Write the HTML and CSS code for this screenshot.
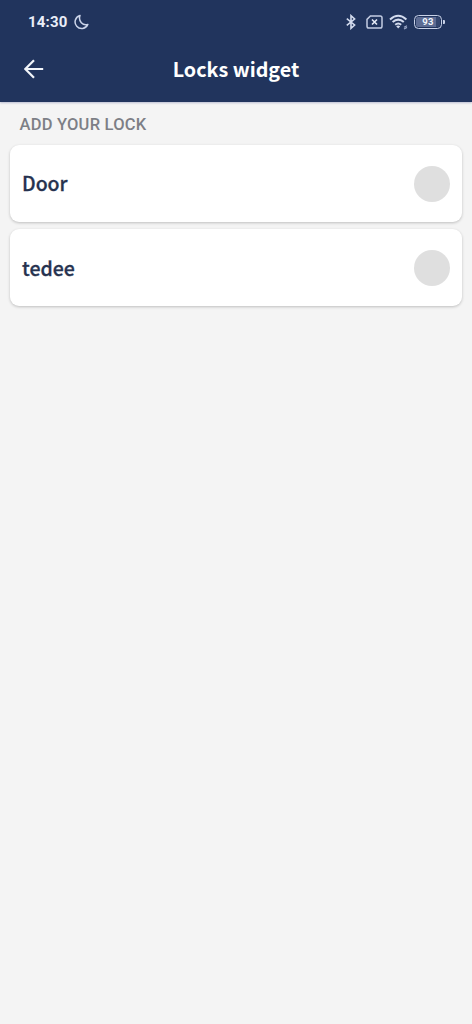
FILE: index.html
```html
<!DOCTYPE html>
<html lang="en">
<head>
<meta charset="utf-8">
<title>Locks widget</title>
<link rel="stylesheet" href="styles.css">
</head>
<body>
<header class="header">
  <div class="status">
    <div class="status-left">
      <span class="time">14:30</span>
      <svg class="moon" width="16" height="16" viewBox="0 0 16 16"><path d="M6 1.5A6.6 6.6 0 1 0 13.8 10.4C8.9 12 4 7.2 6 1.5Z"/></svg>
    </div>
    <div class="status-right">
      <svg class="bluetooth" width="12" height="16" viewBox="0 0 12 16"><path d="M1.8 4.6 9.6 11 6 14.3V1.7L9.6 5 1.8 11.4"/></svg>
      <svg class="sim" width="17" height="14" viewBox="0 0 17 14"><path d="M4.4 1H14.2Q16 1 16 2.8V11.2Q16 13 14.2 13H2.8Q1 13 1 11.2V4.4Z"/><path class="sim-cross" d="m6 4.5 5 5m0-5L6 9.5"/></svg>
      <svg class="wifi" width="20" height="16" viewBox="0 0 20 16"><path d="M1 5.4Q9.2-2 17.4 5.4M3.6 8.1Q9.2 3.2 14.8 8.1M6.2 10.7Q9.2 8.2 12.2 10.7"/><path class="wifi-dot" d="M7.2 12.2Q9.2 10.8 11.2 12.2L9.2 14.6Z"/><path class="wifi-mark" d="M18 11.8 15 13.2M18 13.4 15 15"/></svg>
      <div class="battery"><span class="battery-level">93</span></div>
    </div>
  </div>
  <div class="toolbar">
    <svg class="back" width="20" height="20" viewBox="0 0 20 20"><path d="M19.2 10H1.5M10 1.2 1.3 10 10 18.8"/></svg>
    <h1 class="title">Locks widget</h1>
  </div>
</header>
<main class="content">
  <h2 class="section">ADD YOUR LOCK</h2>
  <div class="list">
    <div class="card"><span class="name">Door</span><span class="radio"></span></div>
    <div class="card"><span class="name">tedee</span><span class="radio"></span></div>
  </div>
</main>
</body>
</html>
```
FILE: styles.css
```css
* { box-sizing: border-box; }
body {
  margin: 0;
  min-height: 1024px;
  background: #f4f4f4;
  font-family: "Noto Sans CJK JP", "Noto Sans", sans-serif;
}
svg { display: block; fill: none; }
.header {
  height: 102px;
  background: #21345d;
  box-shadow: 0 1px 2px rgba(50, 60, 130, .3);
}
.status {
  height: 43px;
  padding: 0 28px;
  display: flex;
  align-items: center;
  justify-content: space-between;
}
.status-left, .status-right { display: flex; align-items: center; }
.status-left { gap: 6.5px; }
.time {
  font: 700 15px/20px Roboto, sans-serif;
  letter-spacing: .2px;
  color: #e9eef8;
}
.moon { stroke: #cbd4e9; stroke-width: 1.5; stroke-linejoin: round; }
.bluetooth { stroke: #d3dbee; stroke-width: 1.6; margin-right: 9px; }
.sim { stroke: #c3cce2; stroke-width: 1.5; margin-right: 6px; }
.sim-cross { stroke: #e5eaf6; stroke-width: 1.6; }
.wifi { stroke: #d3dbee; stroke-width: 2; margin-right: 5px; }
.wifi-dot { fill: #d3dbee; stroke: none; }
.wifi-mark { stroke: #9aa7c7; stroke-width: 1.2; }
.battery {
  position: relative;
  width: 28px;
  height: 14px;
  margin-right: 2px;
  padding: 1px;
  border: 1.5px solid #c9d2e8;
  border-radius: 4.5px;
  display: flex;
}
.battery::after {
  content: "";
  position: absolute;
  right: -4px;
  top: 4px;
  width: 2px;
  height: 4px;
  border-radius: 0 1px 1px 0;
  background: #c9d2e8;
}
.battery-level {
  flex: 1;
  border-radius: 2px;
  background: linear-gradient(90deg, #5d6c93 85%, #34466f 85%);
  color: #f3f6fc;
  font: 700 9.5px/10.5px Roboto, sans-serif;
  letter-spacing: .3px;
  text-align: center;
}
.toolbar {
  height: 52px;
  padding: 0 24px;
  display: grid;
  grid-template-columns: 20px 1fr 20px;
  align-items: center;
}
.back { stroke: #f2f5fa; stroke-width: 2.2; }
.title {
  margin: 0 0 1px;
  text-align: center;
  font-size: 19.7px;
  line-height: 30px;
  font-weight: 700;
  color: #fff;
}
.content { padding: 13px 10px 0 9.5px; }
.section {
  margin: 0 0 10px 10px;
  font: 500 16.5px/20px Roboto, sans-serif;
  letter-spacing: .22px;
  color: #7d7f86;
}
.list { display: grid; gap: 7.5px; }
.card {
  height: 76.7px;
  padding: 0 12px 0 12.5px;
  display: flex;
  align-items: center;
  justify-content: space-between;
  background: #fff;
  border-radius: 9px;
  box-shadow: 0 1px 3px rgba(0, 0, 0, .22);
}
.name {
  font-size: 19.5px;
  line-height: 30px;
  font-weight: 500;
  -webkit-text-stroke: .3px #26324f;
  color: #26324f;
}
.radio {
  width: 36px;
  height: 36px;
  margin-top: .6px;
  border-radius: 50%;
  background: #dfdfdf;
}
```
